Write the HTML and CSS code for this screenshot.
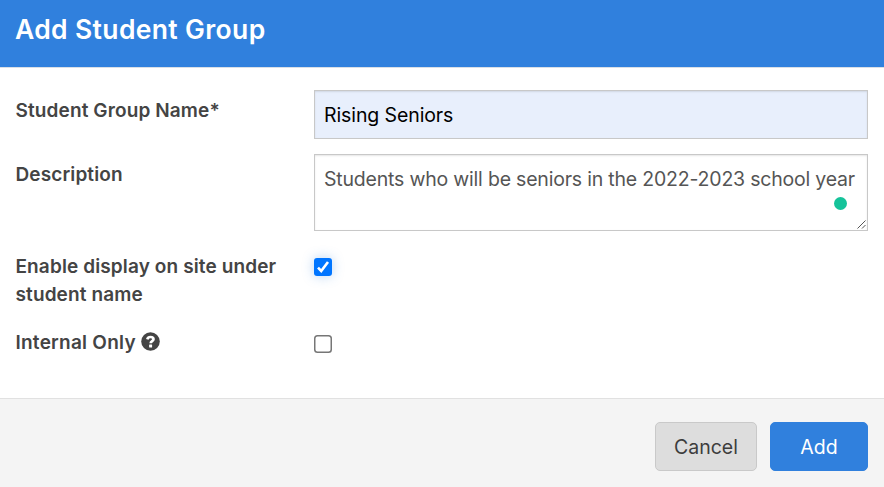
FILE: index.html
```html
<!DOCTYPE html>
<html lang="en">
<head>
<meta charset="utf-8">
<title>Add Student Group</title>
<link rel="stylesheet" href="styles.css">
</head>
<body>
<form class="dialog">
  <header class="dialog-header"><h1><span class="title-text">Add Student Group</span></h1></header>
  <main class="fields">
    <label class="label name-label" for="name"><span>Student Group Name*</span></label>
    <input class="control name-input" id="name" type="text" value="Rising Seniors">
    <label class="label description-label" for="description"><span>Description</span></label>
    <div class="description">
      <textarea class="control description-input" id="description" spellcheck="false">Students who will be seniors in the 2022-2023 school year</textarea>
      <span class="status-dot"></span>
      <svg class="grip" width="9" height="9" viewBox="0 0 9 9"><path d="M.5 8.5l8-8M5 8.5l3.5-3.5"/></svg>
    </div>
    <label class="label display-label" for="display"><span>Enable display on site under</span><br><span class="second-line">student name</span></label>
    <span class="check checked" id="display"><svg width="18" height="18" viewBox="0 0 18 18"><path d="M4 9.7l3.2 3.3L14 4"/></svg></span>
    <span class="label internal-label"><span>Internal Only</span><svg class="help" width="19" height="19" viewBox="0 0 19 19"><circle cx="9.5" cy="9.5" r="9.3"/><path d="M6.3 7.3C6.8 5.6 8 5 9.5 5c1.8 0 3 1 3 2.3 0 2-2.8 1.8-2.8 4"/><rect x="8.1" y="12.5" width="3" height="3" rx=".5"/></svg></span>
    <span class="check unchecked"></span>
  </main>
  <footer class="actions">
    <button class="button cancel" type="button">Cancel</button>
    <button class="button add" type="button">Add</button>
  </footer>
</form>
</body>
</html>
```
FILE: styles.css
```css
* { box-sizing: border-box; }
body { margin: 0; background: #fff; color: #444; font-family: Inter, "Liberation Sans", sans-serif; }
.dialog { display: flex; flex-direction: column; height: 487px; overflow: hidden; }
.dialog-header { flex: 0 0 67px; padding: 13px 15px; background: #3080dd; box-shadow: 0 1px #d9dfe6; }
h1 { margin: 0; color: #fff; font-size: 26.5px; font-weight: 600; line-height: 32px; letter-spacing: .35px; }
.fields { display: grid; flex: 1; grid-template-columns: 299px 554px; grid-template-rows: 64px 92px 77px 75px; padding: 23px 15px 0; align-items: start; }
.label { padding-top: 7px; padding-left: .5px; font-size: 19px; font-weight: 600; line-height: 28px; letter-spacing: .12px; white-space: nowrap; }
.internal-label { padding-top: 6px; letter-spacing: .24px; }
.control { display: block; width: 554px; margin: 0; border: 1px solid #c8c8c8; border-radius: 0; padding: 9px; font: 400 19.5px/28px Inter, "Liberation Sans", sans-serif; letter-spacing: -.1px; box-shadow: inset 0 1px 2px #0000001a; outline: 0; }
.name-input { height: 49px; color: #000; background: #e8effc; }
.description { position: relative; height: 77px; }
.description-input { height: 77px; padding-top: 10px; color: #555; background: #fff; letter-spacing: -.2px; resize: none; overflow: hidden; white-space: nowrap; }
.status-dot { position: absolute; top: 43px; right: 21px; width: 13px; height: 13px; border-radius: 50%; background: #15c39a; }
.grip { position: absolute; right: 2px; bottom: 2px; fill: none; stroke: #555; stroke-width: 1; }
.check { display: block; width: 18px; height: 18px; margin-top: 12px; border-radius: 3px; }
.unchecked { border-radius: 3.5px; box-shadow: inset 0 0 0 1.5px #767676; }
.checked { background: #0075ff; box-shadow: 0 0 12px #3080dd59; }
.checked svg { display: block; fill: none; stroke: #fff; stroke-width: 2.6; }
.help { margin-left: 5px; vertical-align: -2px; fill: #444; }
.help path { fill: none; stroke: #fff; stroke-width: 2.7; }
.help rect { fill: #fff; }
.actions { display: flex; flex: 0 0 89px; justify-content: flex-end; gap: 13px; padding: 23px 16px 0; border-top: 1px solid #e1e1e1; background: #f4f4f4; }
.button { height: 49px; padding: 0; border: 1px solid #c9c9c9; border-radius: 5px; font: 400 19.5px/28px Inter, "Liberation Sans", sans-serif; }
.cancel { width: 102px; color: #3d3d3d; background: #ddd; }
.add { width: 98px; border-color: #3080dd; color: #fff; background: #3080dd; }
```
